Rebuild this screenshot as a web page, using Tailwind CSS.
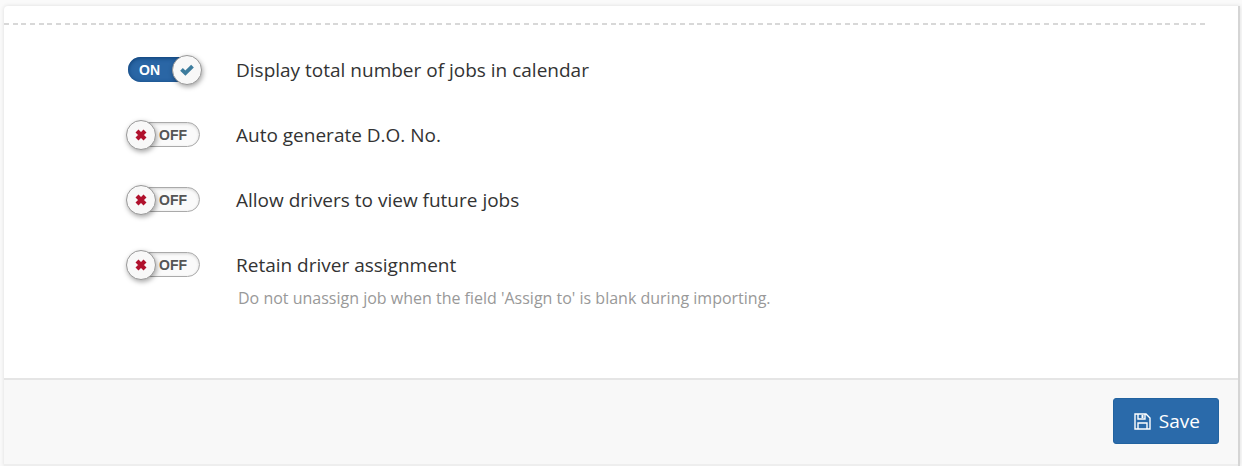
<!DOCTYPE html>
<html lang="en">
<head>
<meta charset="utf-8">
<meta name="viewport" content="width=device-width, initial-scale=1">
<title>Settings</title>
<script src="https://cdn.jsdelivr.net/npm/@tailwindcss/browser@4"></script>
</head>
<body class="bg-[#fafafa] pt-1.5 pr-0.5 pl-1 font-['Open_Sans',sans-serif] text-[#333]">
<svg class="hidden" aria-hidden="true">
  <symbol id="check" viewBox="0 0 14 12"><path d="M1.5 5.4 5.4 9.2 12.5 2.1" fill="none" stroke="currentColor" stroke-width="3.8"/></symbol>
  <symbol id="cross" viewBox="0 0 12 12"><path d="M2 2 10 10M10 2 2 10" fill="none" stroke="currentColor" stroke-width="4.2"/></symbol>
</svg>
<form class="rounded-tl border-r-2 border-[#d5d5d5] bg-white shadow-[0_0_4px_rgba(0,0,0,0.12)]">
  <div class="pt-[17px]">
    <div class="mr-8 h-0.5 bg-[repeating-linear-gradient(90deg,#d8d8d8_0px_5px,transparent_5px_9px,#d8d8d8_9px_14px,transparent_14px_17px,#d8d8d8_17px_22px,transparent_22px_26px)]"></div>
  </div>
  <div class="px-[122px] pt-3 pb-[68px]">
    <label class="flex h-[65px] items-center gap-8">
      <input type="checkbox" checked class="peer sr-only">
      <span class="relative h-8 w-[78px] shrink-0">
        <span class="absolute top-[3px] left-0.5 flex h-[25px] w-[68px] items-center rounded-full bg-[#2a66a5] pt-px pl-[11px] font-['Liberation_Sans',sans-serif] text-sm font-bold text-white shadow-[inset_0_1px_4px_#0b3c72]">ON</span>
        <span class="absolute top-px left-[46px] flex size-[30px] items-center justify-center rounded-full border border-[#999] bg-[#f8f8f8] text-[#3d7c9d] shadow-[1px_2px_5px_rgba(0,0,0,0.35)]"><svg class="h-3 w-3.5"><use href="#check"/></svg></span>
      </span>
      <span class="pt-0.5 text-[19px]">Display total number of jobs in calendar</span>
    </label>
    <label class="flex h-[65px] items-center gap-8">
      <input type="checkbox" class="peer sr-only">
      <span class="relative h-8 w-[78px] shrink-0">
        <span class="absolute top-[3px] left-1.5 flex h-[25px] w-[68px] items-center rounded-full border border-[#aaa] bg-[#fafafa] pt-px pl-[26px] font-['Liberation_Sans',sans-serif] text-sm font-bold text-[#555] shadow-[inset_0_1px_3px_rgba(0,0,0,0.15)]">OFF</span>
        <span class="absolute top-px left-0 flex size-[30px] items-center justify-center rounded-full border border-[#999] bg-[#f8f8f8] text-[#b0102c] shadow-[1px_2px_5px_rgba(0,0,0,0.35)]"><svg class="size-3"><use href="#cross"/></svg></span>
      </span>
      <span class="pt-0.5 text-[19px]">Auto generate D.O. No.</span>
    </label>
    <label class="flex h-[65px] items-center gap-8">
      <input type="checkbox" class="peer sr-only">
      <span class="relative h-8 w-[78px] shrink-0">
        <span class="absolute top-[3px] left-1.5 flex h-[25px] w-[68px] items-center rounded-full border border-[#aaa] bg-[#fafafa] pt-px pl-[26px] font-['Liberation_Sans',sans-serif] text-sm font-bold text-[#555] shadow-[inset_0_1px_3px_rgba(0,0,0,0.15)]">OFF</span>
        <span class="absolute top-px left-0 flex size-[30px] items-center justify-center rounded-full border border-[#999] bg-[#f8f8f8] text-[#b0102c] shadow-[1px_2px_5px_rgba(0,0,0,0.35)]"><svg class="size-3"><use href="#cross"/></svg></span>
      </span>
      <span class="pt-0.5 text-[19px]">Allow drivers to view future jobs</span>
    </label>
    <label class="flex h-[65px] items-center gap-8">
      <input type="checkbox" aria-describedby="retain-help" class="peer sr-only">
      <span class="relative h-8 w-[78px] shrink-0">
        <span class="absolute top-[3px] left-1.5 flex h-[25px] w-[68px] items-center rounded-full border border-[#aaa] bg-[#fafafa] pt-px pl-[26px] font-['Liberation_Sans',sans-serif] text-sm font-bold text-[#555] shadow-[inset_0_1px_3px_rgba(0,0,0,0.15)]">OFF</span>
        <span class="absolute top-px left-0 flex size-[30px] items-center justify-center rounded-full border border-[#999] bg-[#f8f8f8] text-[#b0102c] shadow-[1px_2px_5px_rgba(0,0,0,0.35)]"><svg class="size-3"><use href="#cross"/></svg></span>
      </span>
      <span class="pt-0.5 text-[19px]">Retain driver assignment</span>
    </label>
    <p id="retain-help" class="-mt-[11px] pl-28 text-base text-[#999]">Do not unassign job when the field 'Assign to' is blank during importing.</p>
  </div>
  <footer class="flex justify-end border-y-2 border-t-[#e5e5e5] border-b-[#eee] bg-[#f8f8f8] pt-[18px] pr-[19px] pb-5">
    <button type="submit" class="flex h-[46px] items-center gap-2 rounded-[3px] border border-[#2263a0] bg-[#2a6aaa] pr-[18px] pl-5 text-[19px] text-white">
      <svg class="size-[17px]" viewBox="0 0 17 17" fill="none" stroke="currentColor" stroke-width="1.4"><path d="M1 1H12L16 5V16H1ZM4 1V6H11V1M4 16V10H13V16"/><path d="M8.5 2V5" stroke-width="2"/></svg>
      Save
    </button>
  </footer>
</form>
</body>
</html>
